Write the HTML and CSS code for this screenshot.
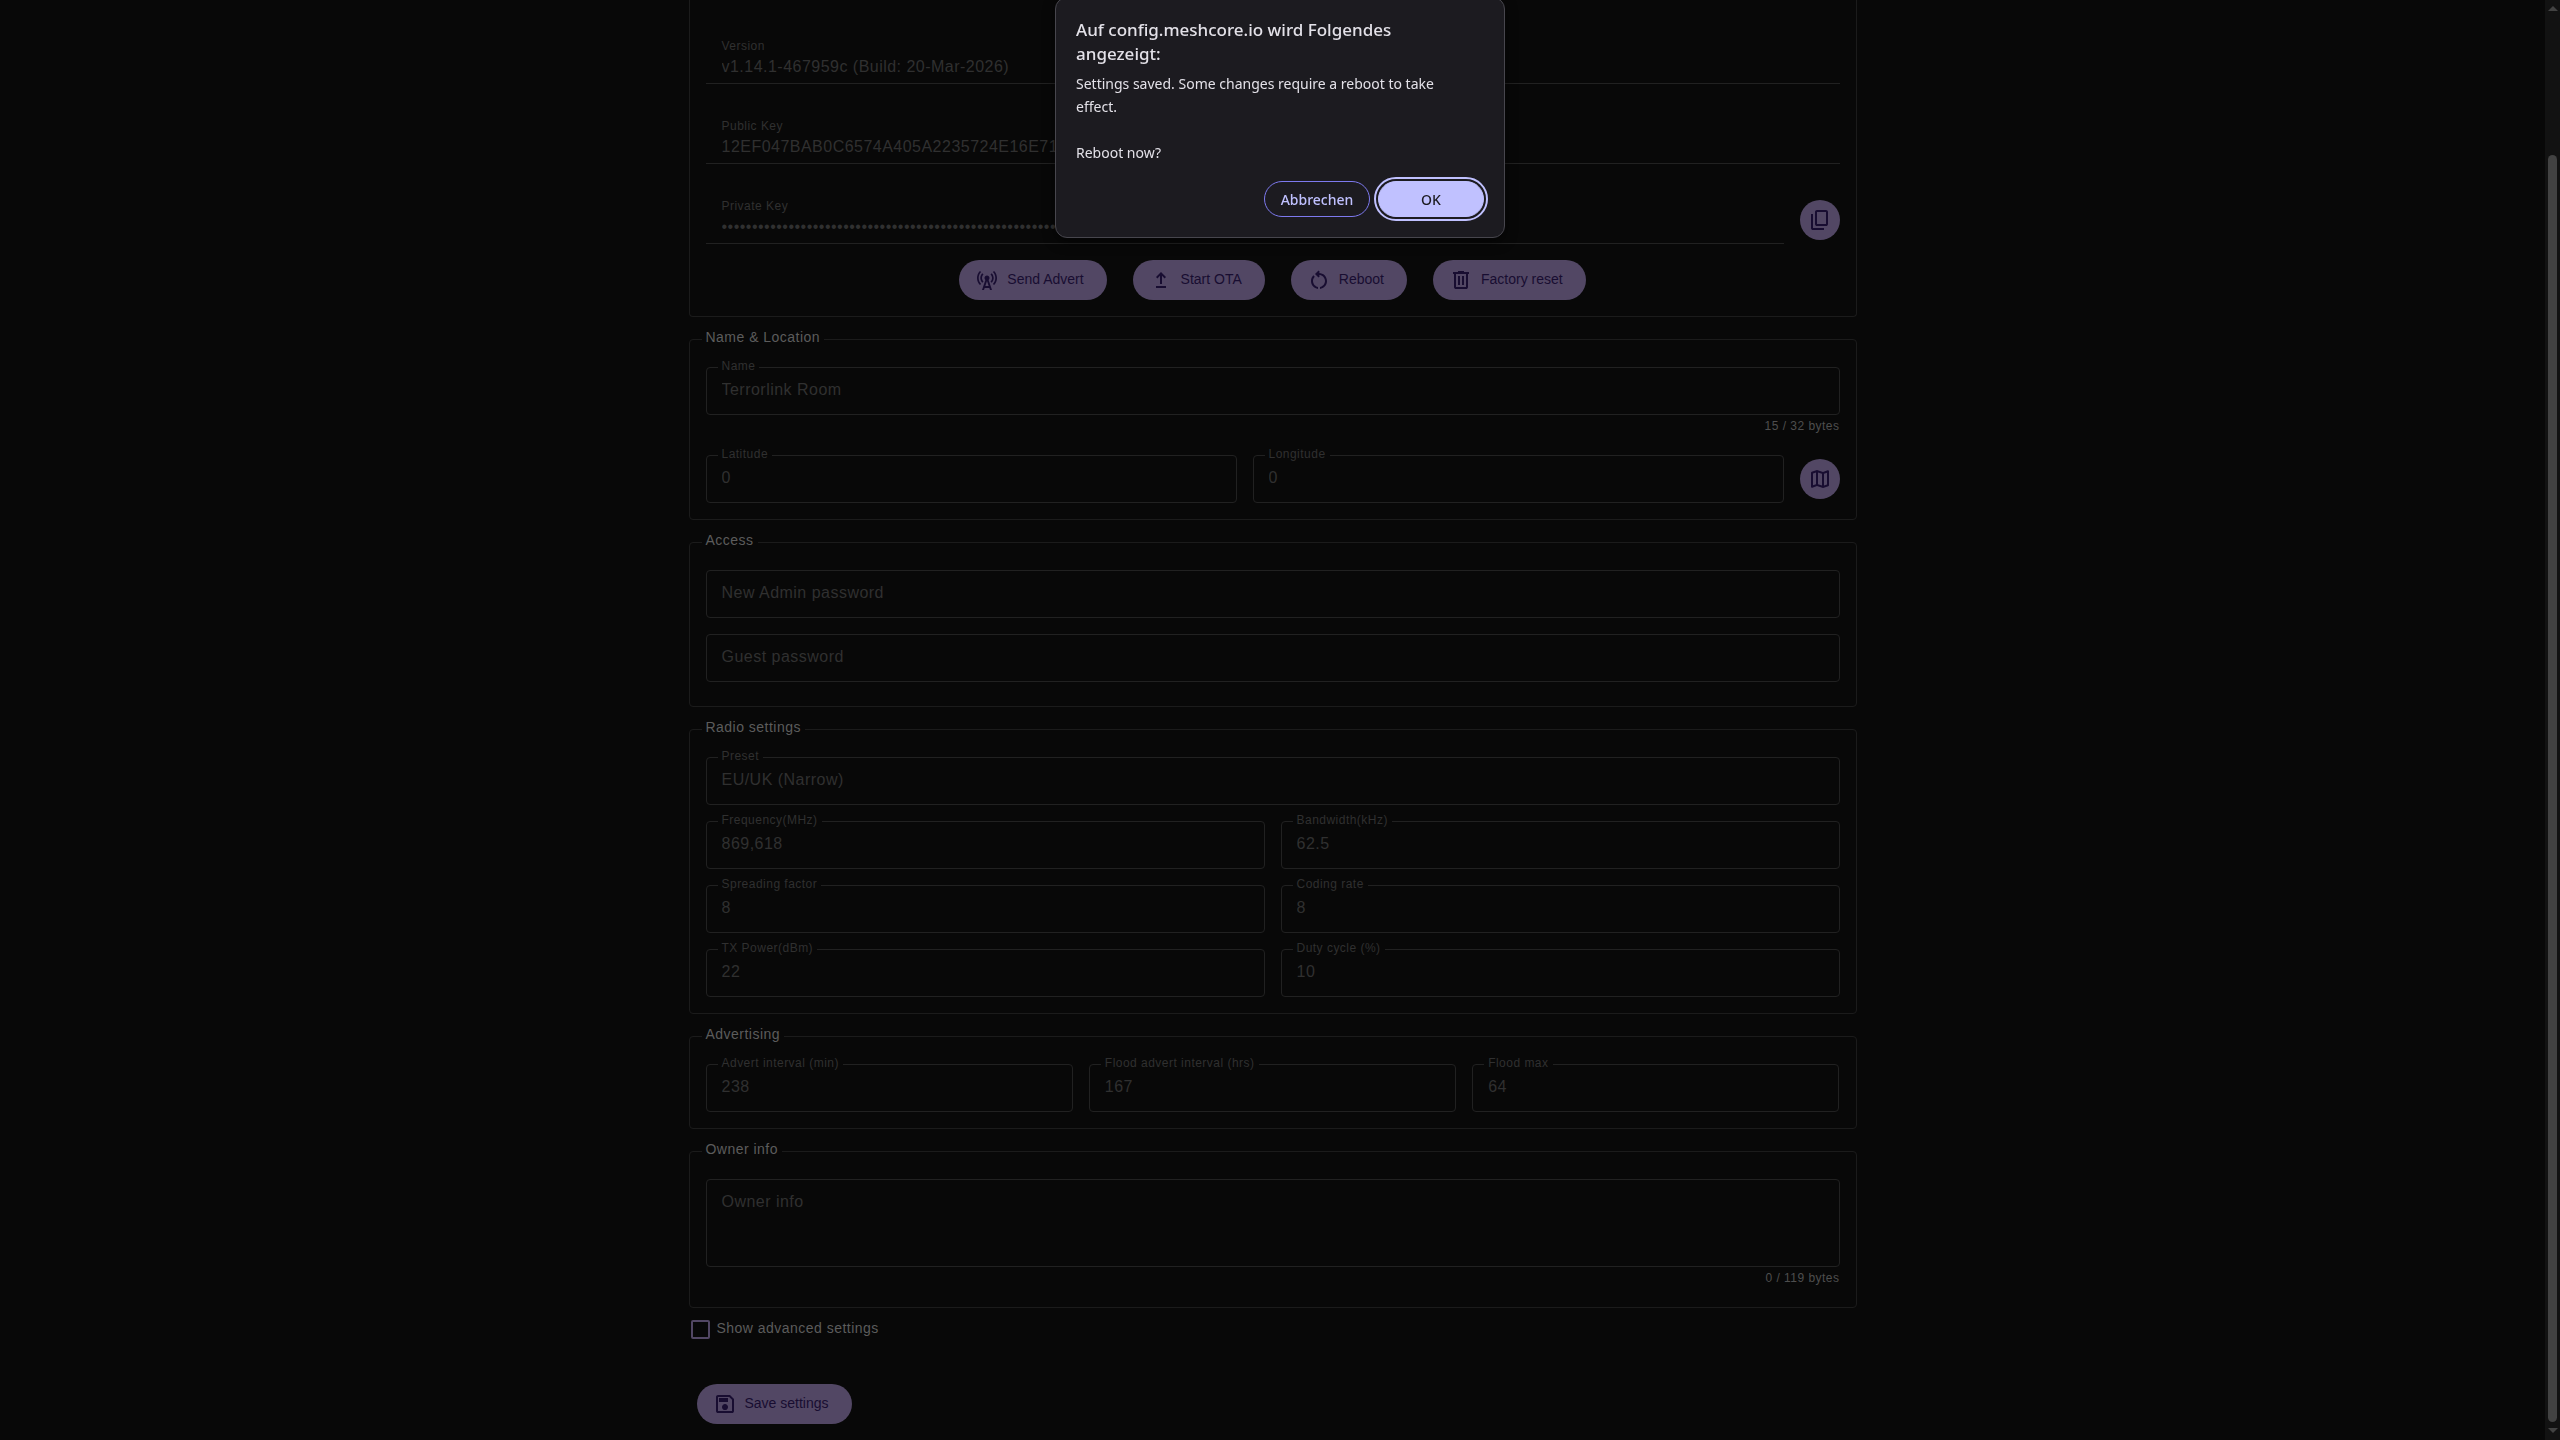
FILE: index.html
```html
<!DOCTYPE html>
<html lang="en">
  <head>
    <meta charset="utf-8">
    <title>MeshCore Config</title>
    <link rel="stylesheet" href="styles.css">
  </head>
  <body>
    <main>
      <form class="settings">
        <fieldset class="device">
          <div class="field plain">
            <label for="version">Version</label>
            <input id="version" type="text" value="v1.14.1-467959c (Build: 20-Mar-2026)" readonly>
          </div>
          <div class="field plain">
            <label for="public-key">Public Key</label>
            <input id="public-key" type="text" value="12EF047BAB0C6574A405A2235724E16E71" readonly>
          </div>
          <div class="row">
            <div class="field plain">
              <label for="private-key">Private Key</label>
              <input id="private-key" type="password" readonly>
            </div>
            <button type="button" class="btn circle" aria-label="Copy private key">
              <svg viewBox="0 0 24 24"><path d="M9 18q-.825 0-1.412-.587Q7 16.825 7 16V4q0-.825.588-1.413Q8.175 2 9 2h9q.825 0 1.413.587Q20 3.175 20 4v12q0 .825-.587 1.413Q18.825 18 18 18Zm0-2h9V4H9v12Zm-4 6q-.825 0-1.412-.587Q3 20.825 3 20V6h2v14h11v2Z"/></svg>
            </button>
          </div>
          <div class="actions">
            <button type="button" class="btn">
              <svg viewBox="0 0 24 24"><path d="M7.3 14.7l1.2-1.2c-1-1-1.5-2.3-1.5-3.5 0-1.3.5-2.6 1.5-3.5L7.3 5.3c-1.3 1.3-2 3-2 4.7s.7 3.4 2 4.7zM19.1 2.9l-1.2 1.2c1.6 1.6 2.4 3.8 2.4 5.9 0 2.1-.8 4.3-2.4 5.9l1.2 1.2c2-2 2.9-4.5 2.9-7.1 0-2.6-1-5.1-2.9-7.1zM6.1 4.1L4.9 2.9C3 4.9 2 7.4 2 10c0 2.6 1 5.1 2.9 7.1l1.2-1.2c-1.6-1.6-2.4-3.8-2.4-5.9 0-2.1.8-4.3 2.4-5.9zM16.7 14.7c1.3-1.3 2-3 2-4.7-.1-1.7-.7-3.4-2-4.7l-1.2 1.2c1 1 1.5 2.3 1.5 3.5 0 1.3-.5 2.6-1.5 3.5l1.2 1.2zM14.5 10c0-1.38-1.12-2.5-2.5-2.5S9.5 8.62 9.5 10c0 .76.34 1.42.87 1.88L7 22h2l.67-2h4.67L15 22h2l-3.37-10.12c.53-.46.87-1.12.87-1.88zm-4.17 8L12 13l1.67 5h-3.34z"/></svg>
              <span>Send Advert</span>
            </button>
            <button type="button" class="btn">
              <svg viewBox="0 0 24 24"><path d="M7 18h10v2H7zM12 4L7 9l1.4 1.4L11 7.8V16h2V7.8l2.6 2.6L17 9z"/></svg>
              <span>Start OTA</span>
            </button>
            <button type="button" class="btn">
              <svg viewBox="0 0 24 24"><path d="M6 13c0-1.65.67-3.15 1.76-4.24L6.34 7.34C4.9 8.79 4 10.79 4 13c0 4.08 3.05 7.44 7 7.93v-2.02c-2.83-.48-5-2.94-5-5.91zm14 0c0-4.42-3.58-8-8-8-.06 0-.12.01-.18.01l1.09-1.09L11.5 2.5 8 6l3.5 3.5 1.41-1.41-1.08-1.08c.06 0 .12-.01.17-.01 3.31 0 6 2.69 6 6 0 2.97-2.17 5.43-5 5.91v2.02c3.95-.49 7-3.85 7-7.93z"/></svg>
              <span>Reboot</span>
            </button>
            <button type="button" class="btn">
              <svg viewBox="0 0 24 24"><path d="M7 21q-.825 0-1.412-.587Q5 19.825 5 19V6H4V4h5V3h6v1h5v2h-1v13q0 .825-.587 1.413Q17.825 21 17 21ZM17 6H7v13h10ZM9 17h2V8H9Zm4 0h2V8h-2Z"/></svg>
              <span>Factory reset</span>
            </button>
          </div>
        </fieldset>

        <fieldset>
          <legend>Name &amp; Location</legend>
          <div class="field with-help">
            <label for="name">Name</label>
            <input id="name" type="text" value="Terrorlink Room">
            <output class="help" for="name">15 / 32 bytes</output>
          </div>
          <div class="row">
            <div class="field">
              <label for="lat">Latitude</label>
              <input id="lat" type="text" value="0">
            </div>
            <div class="field">
              <label for="lon">Longitude</label>
              <input id="lon" type="text" value="0">
            </div>
            <button type="button" class="btn circle" aria-label="Pick on map">
              <svg viewBox="0 0 24 24"><path d="M15 21l-6-2.1-4.65 1.8q-.5.2-.925-.112Q3 20.275 3 19.75v-14q0-.325.188-.575Q3.375 4.925 3.7 4.8L9 3l6 2.1 4.65-1.8q.5-.2.925.112.425.313.425.838v14q0 .325-.187.575-.188.25-.513.375ZM14 18.55V6.85l-4-1.4v11.7Zm2 0 3-1V5.7l-3 1.15ZM5 18.3l3-1.15V5.45l-3 1Z"/></svg>
            </button>
          </div>
        </fieldset>

        <fieldset class="access">
          <legend>Access</legend>
          <div class="field empty">
            <label for="admin-pw">New Admin password</label>
            <input id="admin-pw" type="text">
          </div>
          <div class="field empty">
            <label for="guest-pw">Guest password</label>
            <input id="guest-pw" type="text">
          </div>
        </fieldset>

        <fieldset>
          <legend>Radio settings</legend>
          <div class="field">
            <label for="preset">Preset</label>
            <select id="preset"><option>EU/UK (Narrow)</option></select>
          </div>
          <div class="row">
            <div class="field">
              <label for="freq">Frequency(MHz)</label>
              <input id="freq" type="text" value="869,618">
            </div>
            <div class="field">
              <label for="bw">Bandwidth(kHz)</label>
              <select id="bw"><option>62.5</option></select>
            </div>
          </div>
          <div class="row">
            <div class="field">
              <label for="sf">Spreading factor</label>
              <select id="sf"><option>8</option></select>
            </div>
            <div class="field">
              <label for="cr">Coding rate</label>
              <select id="cr"><option>8</option></select>
            </div>
          </div>
          <div class="row">
            <div class="field">
              <label for="tx">TX Power(dBm)</label>
              <input id="tx" type="text" value="22">
            </div>
            <div class="field">
              <label for="duty">Duty cycle (%)</label>
              <input id="duty" type="text" value="10">
            </div>
          </div>
        </fieldset>

        <fieldset>
          <legend>Advertising</legend>
          <div class="row">
            <div class="field">
              <label for="advert">Advert interval (min)</label>
              <input id="advert" type="text" value="238">
            </div>
            <div class="field">
              <label for="flood">Flood advert interval (hrs)</label>
              <input id="flood" type="text" value="167">
            </div>
            <div class="field">
              <label for="flood-max">Flood max</label>
              <input id="flood-max" type="text" value="64">
            </div>
          </div>
        </fieldset>

        <fieldset>
          <legend>Owner info</legend>
          <div class="field empty with-help">
            <label for="owner">Owner info</label>
            <textarea id="owner"></textarea>
            <output class="help" for="owner">0 / 119 bytes</output>
          </div>
        </fieldset>

        <label class="check">
          <input type="checkbox">
          <span>Show advanced settings</span>
        </label>

        <button type="submit" class="btn save">
          <svg viewBox="0 0 24 24"><path d="M21 7v12q0 .825-.587 1.413Q19.825 21 19 21H5q-.825 0-1.413-.587Q3 19.825 3 19V5q0-.825.587-1.413Q4.175 3 5 3h12Zm-2 .85L16.15 5H5v14h14ZM12 18q1.25 0 2.125-.875T15 15q0-1.25-.875-2.125T12 12q-1.25 0-2.125.875T9 15q0 1.25.875 2.125T12 18Zm-6-8h9V6H6Z"/></svg>
          <span>Save settings</span>
        </button>
      </form>
    </main>

    <div class="scrollbar">
      <svg viewBox="0 0 10 5"><path d="M0 5L5 0l5 5z"/></svg>
      <div class="thumb"></div>
      <svg viewBox="0 0 10 5"><path d="M0 0h10L5 5z"/></svg>
    </div>

    <div class="dialog" role="alertdialog" aria-labelledby="dialog-title">
      <h1 id="dialog-title">Auf config.meshcore.io wird Folgendes angezeigt:</h1>
      <p>Settings saved. Some changes require a reboot to take effect.</p>
      <p>Reboot now?</p>
      <div class="dialog-buttons">
        <button type="button">Abbrechen</button>
        <button type="button" class="ok">OK</button>
      </div>
    </div>

    <script>
      // private key is never shown, only dots
      document.getElementById("private-key").value = "0".repeat(96);
    </script>
  </body>
</html>
```
FILE: styles.css
```css
* {
  box-sizing: border-box;
}

body {
  margin: 0;
  display: flex;
  height: 100vh;
  overflow: hidden;
  background: #080808;
  color: #5c5c5c;
  font-family: "Liberation Sans", Arial, sans-serif;
  font-size: 16px;
  letter-spacing: 0.03em;
}

main {
  flex: 1;
  min-width: 0;
}

.settings {
  max-width: 1168px;
  margin: 0 auto;
}

fieldset {
  display: flex;
  flex-direction: column;
  gap: 16px;
  min-width: 0;
  margin: 0 0 14px;
  padding: 19px 16px 16px;
  border: 1px solid #1b1b1b;
  border-radius: 4px;
}

legend {
  margin-left: -4px;
  padding: 0 4px 5px;
  font-size: 14px;
  line-height: 12px;
}

.device {
  padding-top: 36px;
  border-top: 0;
  border-radius: 0 0 4px 4px;
}

.device .plain {
  margin-bottom: 16px;
}

.device .row .plain {
  margin-bottom: 0;
}

.access {
  padding-bottom: 24px;
}

.row {
  display: flex;
  align-items: center;
  gap: 16px;
}

/* text fields */

.field {
  position: relative;
  flex: 1 1 0;
  min-width: 0;
  color: #303030;
}

.field input,
.field select,
.field textarea {
  display: block;
  appearance: none;
  width: 100%;
  height: 48px;
  margin: 0;
  padding: 0 15px 2px;
  border: 1px solid #212121;
  border-radius: 4px;
  outline: none;
  background: none;
  color: inherit;
  font: inherit;
  letter-spacing: inherit;
}

.field select {
  padding-bottom: 4px;
}

.field textarea {
  height: 88px;
  padding-top: 12px;
  resize: none;
}

.field label {
  position: absolute;
  top: -7px;
  left: 12px;
  padding: 0 4px;
  background: #080808;
  font-size: 12px;
  line-height: 12px;
}

.field.empty label {
  top: 14px;
  font-size: 16px;
  line-height: 18px;
}

.field.plain label {
  top: 4px;
}

.field.plain input {
  padding-top: 16px;
  padding-left: 16px;
  border-width: 0 0 1px;
  border-radius: 0;
}

.with-help {
  flex: none;
}

.help {
  display: block;
  height: 24px;
  padding-top: 4px;
  color: #4e4e4e;
  font-size: 12px;
  line-height: 14px;
  text-align: right;
}

/* buttons */

.btn {
  display: inline-flex;
  align-items: center;
  gap: 8px;
  height: 40px;
  padding: 0 23px 0 16px;
  border: 0;
  border-radius: 20px;
  background: #524764;
  color: #180d31;
  font-family: inherit;
  font-size: 14px;
}

.btn svg {
  width: 24px;
  height: 24px;
  fill: currentColor;
}

.btn span {
  padding-bottom: 3px;
}

.circle {
  width: 40px;
  padding: 0 8px;
}

.actions {
  display: flex;
  justify-content: center;
  gap: 26px;
}

.check {
  display: flex;
  align-items: center;
  gap: 7px;
  height: 24px;
  margin: -5px 0 43px 2px;
  font-size: 14px;
}

.check span {
  padding-bottom: 2px;
}

.check input {
  appearance: none;
  width: 19px;
  height: 19px;
  margin: 0;
  border: 2px solid #524764;
  border-radius: 2px;
}

.save {
  margin-left: 8px;
}

/* page scrollbar */

.scrollbar {
  display: flex;
  flex-direction: column;
  align-items: center;
  width: 15px;
  padding: 6px 0 7px;
  background: #121212;
}

.scrollbar svg {
  width: 10px;
  height: 5px;
  fill: #424242;
}

.thumb {
  flex: 1;
  width: 9px;
  margin: 10vh 0 6px;
  border-radius: 5px;
  background: #424242;
}

/* browser confirm dialog */

.dialog {
  position: fixed;
  top: -3px;
  left: 50%;
  transform: translateX(-50%);
  width: 450px;
  padding: 20px;
  border: 1px solid #47464d;
  border-radius: 12px;
  background: #1c1b20;
  box-shadow: 0 4px 12px rgba(0, 0, 0, 0.5);
  color: #e3e1e8;
  font-family: "Noto Sans", sans-serif;
  letter-spacing: normal;
}

.dialog h1 {
  margin: 0 0 6px;
  padding-right: 24px;
  font-size: 17px;
  font-weight: 500;
  line-height: 24px;
}

.dialog p {
  margin: 0 0 23px;
  padding-right: 24px;
  font-size: 14px;
  line-height: 23px;
}

.dialog-buttons {
  display: flex;
  justify-content: flex-end;
  gap: 8px;
  margin-top: -6px;
}

.dialog-buttons button {
  min-width: 106px;
  height: 36px;
  padding: 0 15px;
  border: 1px solid #7d79ee;
  border-radius: 18px;
  background: none;
  color: #c0c1ff;
  font-family: inherit;
  font-size: 14px;
  font-weight: 500;
}

.dialog-buttons .ok {
  border-color: #c0c1ff;
  outline: 2px solid #c0c1ff;
  outline-offset: 2px;
  background: #c0c1ff;
  color: #1c1b20;
}
```
